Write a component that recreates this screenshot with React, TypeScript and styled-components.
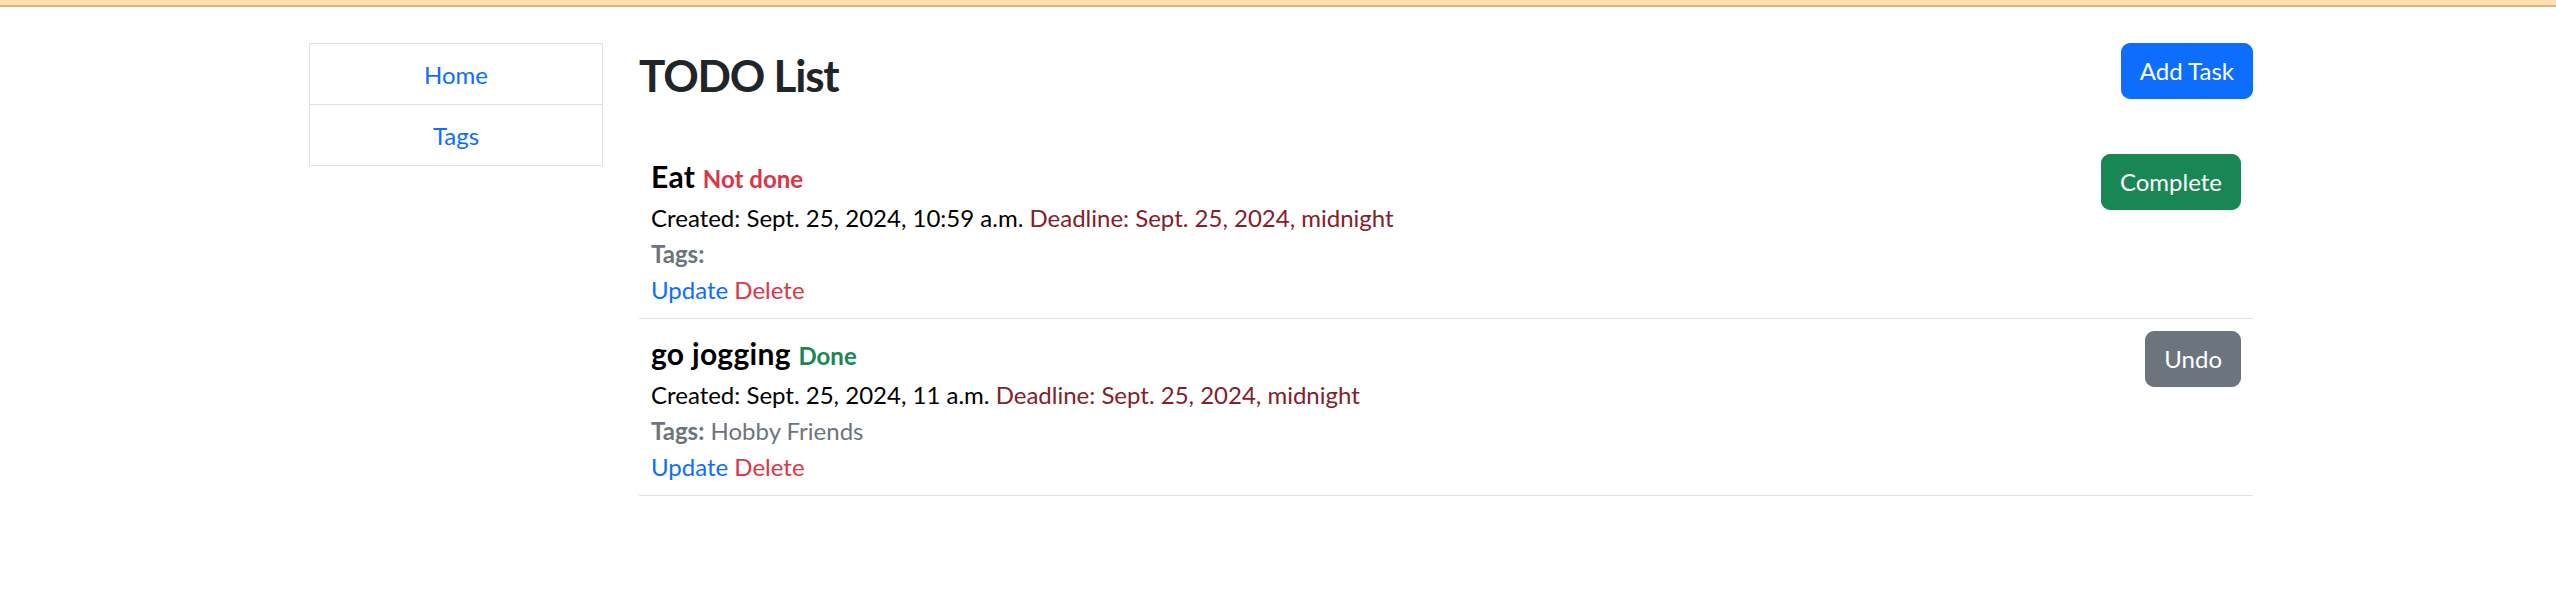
import React from "react"
import styled, { createGlobalStyle } from "styled-components"

const GlobalStyle = createGlobalStyle`
  body {
    margin: 0;
    background: #fff;
    font-family: Lato, "Open Sans", sans-serif;
    color: #212529;
  }
  * {
    box-sizing: border-box;
  }
`

const TopBar = styled.div`
  height: 7px;
  background: #ffdeb0;
  border-bottom: 2px solid #d6b58e;
`

const Container = styled.div`
  width: 1944px;
  margin: 36px 0 0 309px;
  display: flex;
  align-items: flex-start;
  gap: 36px;
`

const NavList = styled.nav`
  width: 294px;
  flex-shrink: 0;
  border: 1px solid #dee2e6;
  display: flex;
  flex-direction: column;
`

const NavLink = styled.a`
  display: block;
  padding: 13px 24px 11px;
  text-align: center;
  font-size: 24px;
  line-height: 36px;
  color: #0d6efd;
  text-decoration: none;
  & + & {
    border-top: 1px solid #dee2e6;
  }
`

const Main = styled.main`
  flex: 1;
  min-width: 0;
`

const Header = styled.div`
  display: flex;
  justify-content: space-between;
  align-items: flex-start;
  margin-bottom: 40px;
`

const Title = styled.h2`
  margin: 6px 0 0;
  font-size: 44px;
  line-height: 53px;
  font-weight: 700;
  letter-spacing: -1.2px;
  color: #212529;
`

const variants: Record<string, string> = {
  primary: "#0d6efd",
  success: "#198754",
  secondary: "#6c757d",
}

const Button = styled.button<{ $variant: string }>`
  flex-shrink: 0;
  font-family: inherit;
  font-size: 24px;
  line-height: 36px;
  padding: 9px 18px;
  border: 1.5px solid ${p => variants[p.$variant]};
  border-radius: 9px;
  background: ${p => variants[p.$variant]};
  color: #fff;
  cursor: pointer;
`

const TaskList = styled.ul`
  list-style: none;
  margin: 0;
  padding: 0;
`

const TaskItem = styled.li`
  display: flex;
  justify-content: space-between;
  align-items: flex-start;
  padding: 12px 12px 10px;
  border-bottom: 1px solid #dee2e6;
`

const TaskBody = styled.div`
  font-size: 24px;
  line-height: 36px;
`

const TaskName = styled.h5`
  margin: 0 0 2px;
  font-size: 30px;
  line-height: 44px;
  font-weight: 700;
  letter-spacing: 0.3px;
  color: #000;
`

const Status = styled.span<{ $done: boolean }>`
  font-size: 24px;
  line-height: 1;
  letter-spacing: 0;
  color: ${p => (p.$done ? "#198754" : "#dc3545")};
`

const Line = styled.div`
  color: #000;
`

const Deadline = styled.span`
  color: #842029;
`

const Tags = styled.div`
  color: #6c757d;
  b {
    font-weight: 700;
  }
`

const Action = styled.a<{ $danger?: boolean }>`
  color: ${p => (p.$danger ? "#dc3545" : "#0d6efd")};
  text-decoration: none;
`

type Task = {
  name: string
  done: boolean
  created: string
  deadline: string
  tags: string[]
}

const tasks: Task[] = [
  {
    name: "Eat",
    done: false,
    created: "Sept. 25, 2024, 10:59 a.m.",
    deadline: "Sept. 25, 2024, midnight",
    tags: [],
  },
  {
    name: "go jogging",
    done: true,
    created: "Sept. 25, 2024, 11 a.m.",
    deadline: "Sept. 25, 2024, midnight",
    tags: ["Hobby", "Friends"],
  },
]

export default function App() {
  return (
    <>
      <GlobalStyle />
      <TopBar />
      <Container>
        <NavList>
          <NavLink href="#">Home</NavLink>
          <NavLink href="#">Tags</NavLink>
        </NavList>
        <Main>
          <Header>
            <Title>TODO List</Title>
            <Button $variant="primary">Add Task</Button>
          </Header>
          <TaskList>
            {tasks.map(task => (
              <TaskItem key={task.name}>
                <TaskBody>
                  <TaskName>
                    {task.name}{" "}
                    <Status $done={task.done}>{task.done ? "Done" : "Not done"}</Status>
                  </TaskName>
                  <Line>
                    Created: {task.created} <Deadline>Deadline: {task.deadline}</Deadline>
                  </Line>
                  <Tags>
                    <b>Tags:</b> {task.tags.join(" ")}
                  </Tags>
                  <div>
                    <Action href="#">Update</Action> <Action href="#" $danger>Delete</Action>
                  </div>
                </TaskBody>
                <Button $variant={task.done ? "secondary" : "success"}>
                  {task.done ? "Undo" : "Complete"}
                </Button>
              </TaskItem>
            ))}
          </TaskList>
        </Main>
      </Container>
    </>
  )
}
